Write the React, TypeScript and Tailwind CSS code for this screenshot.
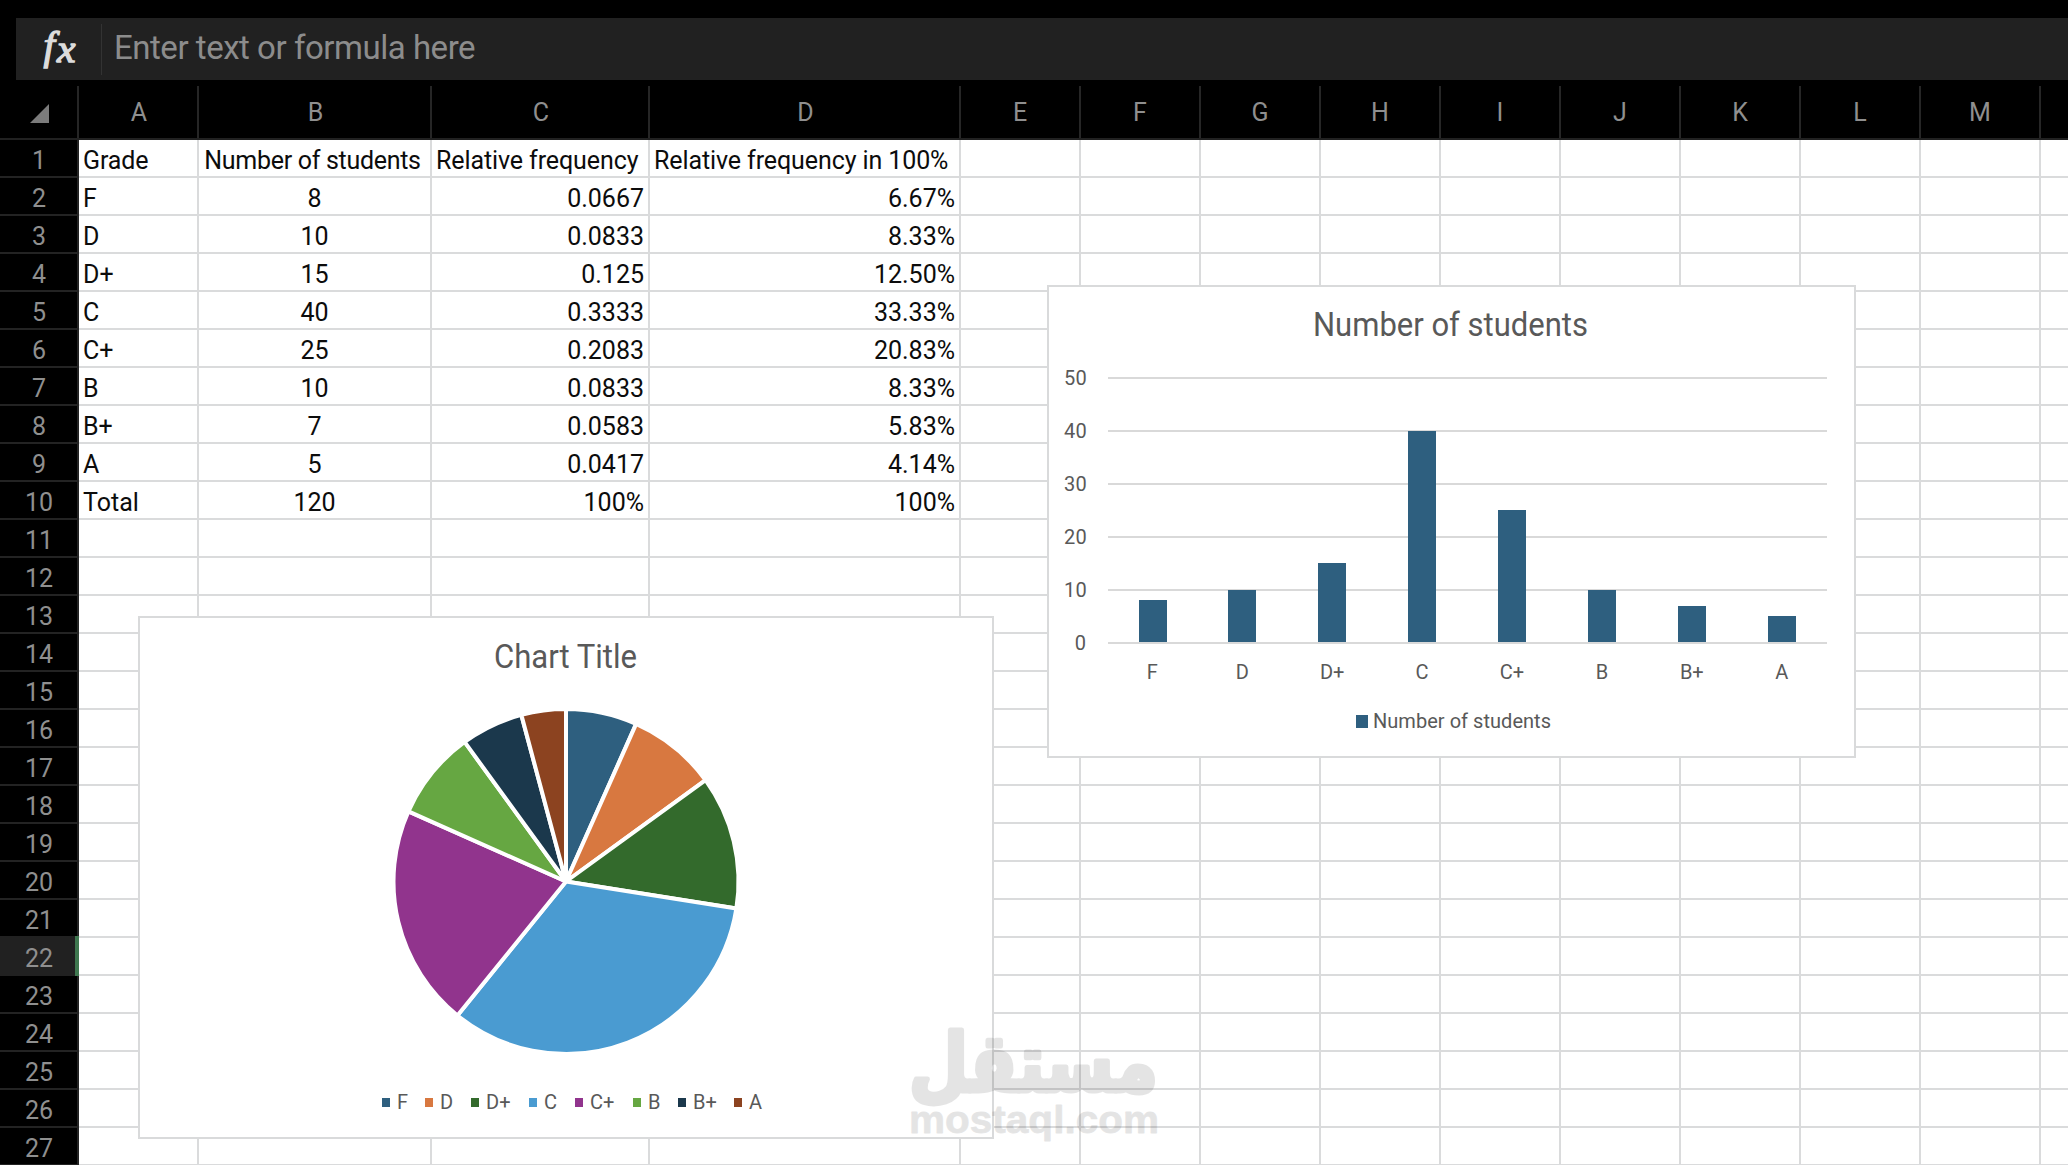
import React from "react";
import clsx from "clsx";

type Align = "left" | "center" | "right";

const columns = [
  { name: "A", width: "w-[120px]" },
  { name: "B", width: "w-[233px]" },
  { name: "C", width: "w-[218px]" },
  { name: "D", width: "w-[311px]" },
  { name: "E", width: "w-[120px]" },
  { name: "F", width: "w-[120px]" },
  { name: "G", width: "w-[120px]" },
  { name: "H", width: "w-[120px]" },
  { name: "I", width: "w-[120px]" },
  { name: "J", width: "w-[120px]" },
  { name: "K", width: "w-[120px]" },
  { name: "L", width: "w-[120px]" },
  { name: "M", width: "w-[120px]" },
  { name: "", width: "w-[120px]" },
];

const sheet = [
  ["Grade", "Number of students", "Relative frequency", "Relative frequency in 100%"],
  ["F", "8", "0.0667", "6.67%"],
  ["D", "10", "0.0833", "8.33%"],
  ["D+", "15", "0.125", "12.50%"],
  ["C", "40", "0.3333", "33.33%"],
  ["C+", "25", "0.2083", "20.83%"],
  ["B", "10", "0.0833", "8.33%"],
  ["B+", "7", "0.0583", "5.83%"],
  ["A", "5", "0.0417", "4.14%"],
  ["Total", "120", "100%", "100%"],
];

const ROW_COUNT = 27;
const SELECTED_ROW = 22;

const grades = [
  { label: "F", value: 8, color: "#2e5f7f", legendX: 382 },
  { label: "D", value: 10, color: "#d87840", legendX: 425 },
  { label: "D+", value: 15, color: "#336a2c", legendX: 471 },
  { label: "C", value: 40, color: "#4a9bd1", legendX: 529 },
  { label: "C+", value: 25, color: "#91348d", legendX: 575 },
  { label: "B", value: 10, color: "#66a742", legendX: 633 },
  { label: "B+", value: 7, color: "#1b384c", legendX: 678 },
  { label: "A", value: 5, color: "#8c4320", legendX: 734 },
];

const columnAlign: Align[] = ["left", "center", "right", "right"];

const FormulaBar: React.FC = () => (
  <div className="ml-4 mt-[18px] flex h-[62px] shrink-0 items-center bg-[#212121]">
    <svg className="shrink-0" width="85" height="62" viewBox="0 0 85 62">
      <g fill="#dcdcdc" stroke="#dcdcdc" strokeWidth="1.3" fontStyle="italic" fontFamily="'Liberation Serif', serif">
        <text x="27.5" y="40.5" fontSize="41">f</text>
        <text x="41" y="43.5" fontSize="38" textLength="18.5" lengthAdjust="spacingAndGlyphs">x</text>
      </g>
    </svg>
    <div className="h-[51px] w-px shrink-0 bg-[#333333]" />
    <span className="ml-3 whitespace-nowrap pb-1 text-[33px] leading-none tracking-[-0.47px] text-[#8c8c8c]">
      Enter text or formula here
    </span>
  </div>
);

const ColumnHeaders: React.FC = () => (
  <div className="mt-1.5 flex h-[54px] shrink-0 border-b-2 border-[#212121]">
    <div className="flex w-[79px] shrink-0 border-r-2 border-[#262626]">
      <svg className="ml-[30px] mt-[18px]" width="19" height="19" viewBox="0 0 19 19">
        <polygon points="0,19 19,19 19,0" fill="#7b7b7b" />
      </svg>
    </div>
    {columns.map((col, idx) => (
      <div
        key={idx}
        className={clsx(
          "flex shrink-0 items-center justify-center border-r-2 border-[#262626] pt-px text-[25px] leading-none text-[#8f8f8f]",
          col.width,
          idx < 4 && "pl-0.5"
        )}
      >
        {col.name}
      </div>
    ))}
  </div>
);

const SheetRow: React.FC<{ number: number }> = ({ number }) => {
  const cells = sheet[number - 1] ?? [];
  const selected = number === SELECTED_ROW;

  return (
    <div className="flex h-[38px]">
      <div
        className={clsx(
          "flex shrink-0 items-center justify-center text-[25px] leading-none text-[#8f8f8f]",
          selected
            ? "-mt-0.5 h-10 w-[79px] border-r-4 border-[#3f7850] bg-[#212121] pl-[3px] pt-[5px]"
            : "h-[38px] w-[79px] border-b-2 border-r-2 border-[#232323] bg-black pl-px pt-[5px]"
        )}
      >
        {number}
      </div>
      {columns.map((col, idx) => (
        <div
          key={idx}
          className={clsx(
            "flex h-[38px] shrink-0 items-center overflow-hidden whitespace-nowrap border-b-2 border-r-2 border-[#dadbdc] px-1 pt-[5px] text-[25px] leading-none text-[#0c0c0c]",
            col.width,
            number === 1 && (idx === 1 ? "pr-2 tracking-[-0.3px]" : "tracking-[-0.1px]"),
            columnAlign[idx] === "center" && "justify-center",
            columnAlign[idx] === "right" && number > 1 && "justify-end"
          )}
        >
          {cells[idx]}
        </div>
      ))}
    </div>
  );
};

const BarChart: React.FC = () => (
  <svg className="absolute left-[1047px] top-[285px]" width="809" height="473" viewBox="1047 285 809 473">
    <rect x="1048" y="286" width="807" height="471" fill="#fff" stroke="#d9dadb" strokeWidth="2" />
    <text x="1313" y="336" fontSize="33" fill="#595959" textLength="275" lengthAdjust="spacingAndGlyphs">
      Number of students
    </text>
    {[0, 10, 20, 30, 40, 50].map((tick) => (
      <g key={tick}>
        <rect x="1108" y={642 - tick * 5.3} width="719" height="2" fill="#d9d9d9" />
        <text
          x={tick === 0 ? 1080.5 : 1075.5}
          y={Math.round(649.5 - tick * 5.3)}
          fontSize="20"
          fill="#595959"
          textAnchor="middle"
          letterSpacing="0.3"
        >
          {tick}
        </text>
      </g>
    ))}
    {grades.map((grade, idx) => {
      const top = Math.round(642.6 - grade.value * 5.3);
      return (
        <g key={grade.label}>
          <rect x={Math.floor(1139.1 + idx * 89.86)} y={top} width="28" height={642 - top} fill="#2e5f7f" />
          <text x={1152.4 + idx * 89.9} y="679" fontSize="20" fill="#595959" textAnchor="middle">
            {grade.label}
          </text>
        </g>
      );
    })}
    <rect x="1356" y="715" width="12" height="13" fill="#2e5f7f" />
    <text x="1373" y="728" fontSize="20" fill="#595959" textLength="178">
      Number of students
    </text>
  </svg>
);

const PieChart: React.FC = () => {
  const cx = 566;
  const cy = 881.5;
  const radius = 172.5;
  const total = grades.reduce((sum, g) => sum + g.value, 0);

  const point = (amount: number) => {
    const angle = (amount / total) * Math.PI * 2;
    return `${cx + radius * Math.sin(angle)} ${cy - radius * Math.cos(angle)}`;
  };

  let start = 0;
  const slices = grades.map((grade) => {
    const from = start;
    start += grade.value;
    return {
      ...grade,
      d: `M ${cx} ${cy} L ${point(from)} A ${radius} ${radius} 0 0 1 ${point(start)} Z`,
    };
  });

  return (
    <svg className="absolute left-[138px] top-[616px]" width="856" height="523" viewBox="138 616 856 523">
      <rect x="139" y="617" width="854" height="521" fill="#fff" stroke="#d9dadb" strokeWidth="2" />
      <text x="494" y="668" fontSize="33" fill="#595959" textLength="143" lengthAdjust="spacingAndGlyphs">
        Chart Title
      </text>
      {slices.map((slice) => (
        <path key={slice.label} d={slice.d} fill={slice.color} stroke="#fff" strokeWidth="4" strokeLinejoin="round" />
      ))}
      {grades.map((grade) => (
        <g key={grade.label}>
          <rect x={grade.legendX} y="1098" width="8" height="9" fill={grade.color} />
          <text x={grade.legendX + 15} y="1108.5" fontSize="20" fill="#595959">
            {grade.label}
          </text>
        </g>
      ))}
    </svg>
  );
};

const Watermark: React.FC = () => (
  <svg className="absolute left-[880px] top-[985px] overflow-visible" width="310" height="180" viewBox="880 985 310 180">
    <g opacity="0.1" fill="#000" stroke="#000" strokeLinejoin="round">
      <text
        x="1033.5"
        y="1091"
        fontSize="80"
        fontWeight="700"
        fontFamily="'DejaVu Sans', sans-serif"
        strokeWidth="5"
        textAnchor="middle"
        textLength="249"
        lengthAdjust="spacingAndGlyphs"
      >
        مستقل
      </text>
      <text
        x="909"
        y="1133"
        fontSize="39"
        fontWeight="700"
        fontFamily="'Liberation Sans', sans-serif"
        strokeWidth="0.8"
        textLength="250"
        lengthAdjust="spacingAndGlyphs"
      >
        mostaql.com
      </text>
    </g>
  </svg>
);

const App: React.FC = () => {
  const rows = Array.from({ length: ROW_COUNT }, (_, i) => i + 1);

  return (
    <div className="relative flex h-[1165px] w-[2068px] flex-col overflow-hidden bg-black font-[Roboto,sans-serif]">
      <FormulaBar />
      <ColumnHeaders />
      <div className="shrink-0 bg-white">
        {rows.map((number) => (
          <SheetRow key={number} number={number} />
        ))}
      </div>

      {/* Charts float over the cells */}
      <BarChart />
      <PieChart />
      <Watermark />
    </div>
  );
};

export default App;
